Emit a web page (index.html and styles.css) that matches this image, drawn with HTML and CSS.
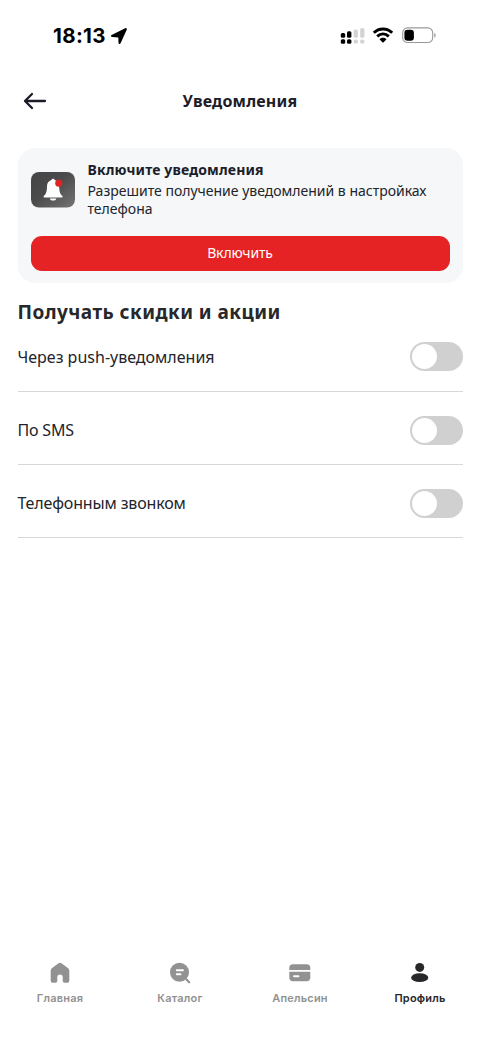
FILE: index.html
```html
<!DOCTYPE html>
<html lang="ru">
<head>
<meta charset="utf-8">
<title>Уведомления</title>
<link rel="stylesheet" href="styles.css">
</head>
<body>
<div class="screen">
  <div class="status">
    <div class="clock"><span class="time">18:13</span>
      <svg width="18" height="18" viewBox="0 0 18 18"><path d="M1.6 8.100 15.200 1.200c1.100-.5 2 .4 1.500 1.500L10.600 16.200c-.6 1.200-2 .9-2.100-.5l-.2-5.300-5.900-.3C.8 10 .5 8.700 1.600 8.100Z"/></svg>
    </div>
    <div class="indicators">
      <svg width="26" height="18" viewBox="0 0 26 18">
        <g fill="#000"><rect x=".8" y="6" width="4.400" height="4.800" rx="1.500"/><rect x="7" y="4.200" width="4.400" height="6.600" rx="1.500"/><rect x=".8" y="12.300" width="4.400" height="4.400" rx="1.500"/><rect x="7" y="12.300" width="4.400" height="4.400" rx="1.500"/></g>
        <g fill="#d3d3d3"><rect x="13.700" y="2.600" width="4.200" height="8.200" rx="1.500"/><rect x="20.200" y="1" width="4.200" height="9.800" rx="1.500"/><rect x="13.700" y="12.500" width="4.200" height="4" rx="1.500"/><rect x="20.200" y="12.500" width="4.200" height="4" rx="1.500"/></g>
      </svg>
      <svg class="wifi" width="22" height="17" viewBox="0 0 22 17"><path d="M1.800 5.800c5.200-5.100 13.200-5.100 18.400 0M5.200 9.400c3.500-3.300 8.100-3.300 11.600 0" fill="none" stroke="#000" stroke-width="2.900"/><path d="M7.500 12.200c2-1.800 5-1.800 7 0L11.400 15.400q-.4.4-.8 0Z"/></svg>
      <svg class="battery" width="35" height="17" viewBox="0 0 35 17"><rect x=".7" y=".9" width="30" height="14.600" rx="4.800" fill="#fff" stroke="#999" stroke-width="1.100"/><rect x="2.400" y="2.700" width="9.500" height="11" rx="3.200"/><path d="M32.300 5.800c1.900.9 1.900 4 0 4.900Z" fill="#999"/></svg>
    </div>
  </div>
  <header class="header">
    <svg class="back" width="24" height="18" viewBox="0 0 24 18"><path d="M9 2 2 9l7 7M2 9h20" fill="none" stroke="#1c1b28" stroke-width="2.300" stroke-linecap="round" stroke-linejoin="round"/></svg>
    <h1>Уведомления</h1>
  </header>
  <main>
    <section class="card">
      <div class="info">
        <svg class="bell" width="44" height="36" viewBox="0 0 44 36">
          <defs><linearGradient id="tile" x1="0" y1="0" x2="1" y2="1"><stop offset="0" stop-color="#454545"/><stop offset=".45" stop-color="#4b4b4b"/><stop offset="1" stop-color="#757575"/></linearGradient></defs>
          <rect width="44" height="35.500" rx="8" fill="url(#tile)"/>
          <path d="M20.500 8.100c.3-1.700 2.900-1.700 3.200 0 2.900.8 4.500 3.200 4.500 6.300 0 5.300 1 7.500 3.200 9.700.5.600.2 1.300-.6 1.300H13.400c-.8 0-1.100-.7-.6-1.300 2.200-2.200 3.200-4.400 3.200-9.700 0-3.100 1.600-5.500 4.500-6.300ZM18.900 26.400h6.400c-.5 2.900-5.900 2.900-6.400 0Z" fill="#fff"/>
          <circle cx="27.800" cy="11.200" r="3.600" fill="#dc2525"/>
        </svg>
        <div class="copy"><h2>Включите уведомления</h2>
          <p>Разрешите получение уведомлений в настройках телефона</p></div>
      </div>
      <button class="primary">Включить</button>
    </section>
    <h3>Получать скидки и акции</h3>
    <div class="row"><span>Через push-уведомления</span><i class="toggle"></i></div>
    <div class="row"><span class="sms">По SMS</span><i class="toggle"></i></div>
    <div class="row"><span class="call">Телефонным звонком</span><i class="toggle"></i></div>
  </main>
  <nav class="tabs">
    <a><svg width="24" height="24" viewBox="0 0 24 24"><path d="M10.600 2.200q1.400-1 2.800 0l6.500 4.800q1.400 1 1.400 2.700v9.500q0 2.600-2.600 2.600h-2.200q-1.800 0-1.800-1.800v-3.700a2.700 2.700 0 0 0-5.400 0V20q0 1.800-1.800 1.800H5.300q-2.600 0-2.600-2.600V9.700q0-1.700 1.400-2.700Z"/></svg><span>Главная</span></a>
    <a><svg width="24" height="24" viewBox="0 0 24 24"><circle cx="11.500" cy="11.300" r="9.500"/><path d="m18.200 18.200 3 3" stroke="#929292" stroke-width="2.200" stroke-linecap="round"/><path d="M8.800 9.200h6.200M8.800 13.300h3.700" stroke="#fff" stroke-width="1.900" stroke-linecap="round"/></svg><span>Каталог</span></a>
    <a><svg width="24" height="24" viewBox="0 0 24 24"><path d="M1.300 8.900V7q0-3.700 3.700-3.700h13.600q3.700 0 3.700 3.700v1.900Z"/><path fill-rule="evenodd" d="M1.300 10.800h21v5.700q0 3.700-3.700 3.700H5q-3.700 0-3.700-3.700ZM6 14.200q-.9 0-.9 1t.9 1h4.500q.9 0 .9-1t-.9-1Z"/></svg><span>Апельсин</span></a>
    <a class="active"><svg width="24" height="24" viewBox="0 0 24 24"><circle cx="11.700" cy="6.400" r="4.500"/><ellipse cx="11.700" cy="16.700" rx="8.600" ry="4.400"/></svg><span>Профиль</span></a>
  </nav>
</div>
</body>
</html>
```
FILE: styles.css
```css
* { box-sizing: border-box; }
body { margin: 0; background: #fff; color: #22232b; font-family: "Noto Sans", sans-serif; }
h1, h2, h3, p { margin: 0; }
span { white-space: nowrap; }
.screen { width: 480px; height: 1043px; display: flex; flex-direction: column; }
.status { height: 72px; display: flex; justify-content: space-between; padding: 0 43px 0 53px; }
.clock { display: flex; align-items: center; height: 71px; gap: 4px; }
.time { font: 700 20.5px/24px Inter, sans-serif; letter-spacing: .35px; color: #000; }
.indicators { display: flex; align-items: center; height: 71px; }
.wifi { margin-left: 6px; }
.battery { margin-left: 8px; }
.header { height: 76px; display: grid; grid-template-columns: 52px 1fr 52px; align-items: center; padding: 0 0 18px; }
.back { margin-left: 23px; }
h1 { text-align: center; font-size: 16px; line-height: 22px; letter-spacing: .2px; color: #1c1d29; }
main { padding: 0 17.5px; flex: 1; }
.card { height: 135px; background: #f5f7f8; border-radius: 17px; padding: 12px 13px; }
.info { display: flex; height: 76px; gap: 13px; }
.bell { margin-top: 12px; flex: none; }
h2 { font-size: 14px; line-height: 20px; letter-spacing: .15px; color: #1c1d29; }
.copy p { width: 350px; font-size: 14px; line-height: 18px; margin-top: 2px; }
.primary { display: block; width: 100%; height: 35px; border: 0; border-radius: 11px; background: #e52224; color: #fff; font: 400 14px/20px "Noto Sans", sans-serif; letter-spacing: -.15px; padding: 0 0 2px; }
h3 { margin-top: 15px; font-size: 19px; line-height: 28px; letter-spacing: .46px; color: #28282a; }
.row { height: 73px; display: flex; align-items: center; justify-content: space-between; border-bottom: 1px solid #d8d8d8; padding-top: 4px; font-size: 16px; line-height: 22px; }
h3 + .row { height: 66px; padding: 0 0 4px; }
.sms { letter-spacing: -.2px; }
.call { letter-spacing: -.15px; }
.toggle { width: 53px; height: 29px; border-radius: 15px; background: #d0d0d0; padding: 2px; }
.toggle::before { content: ""; display: block; width: 25px; height: 25px; border-radius: 50%; background: #fff; }
.tabs { height: 82px; display: grid; grid-template-columns: repeat(4, 120px); }
.tabs a { display: flex; flex-direction: column; align-items: center; gap: 6px; color: #929292; fill: #929292; font: 600 11px/14px Inter, sans-serif; letter-spacing: .2px; }
.tabs .active { color: #28282a; fill: #28282a; }
```
